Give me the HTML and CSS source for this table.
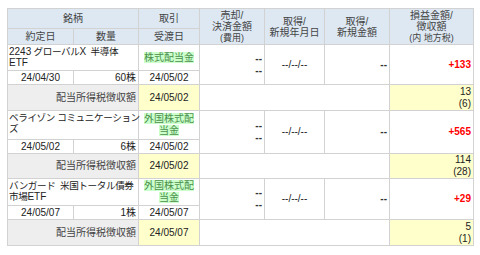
FILE: index.html
```html
<!DOCTYPE html>
<html lang="ja">
<head>
<meta charset="utf-8">
<link rel="stylesheet" href="styles.css">
</head>
<body>
<table class="tbl">
  <colgroup>
    <col class="c1"><col class="c2"><col class="c3"><col class="c4"><col class="c5"><col class="c6"><col class="c7">
  </colgroup>
  <thead>
    <tr class="h1">
      <th colspan="2">銘柄</th>
      <th>取引</th>
      <th rowspan="2">売却/<br>決済金額<br><span class="sm">(費用)</span></th>
      <th rowspan="2">取得/<br>新規年月日</th>
      <th rowspan="2">取得/<br>新規金額</th>
      <th rowspan="2">損益金額/<br>徴収額<br><span class="sm">(内 地方税)</span></th>
    </tr>
    <tr class="h2">
      <th>約定日</th>
      <th>数量</th>
      <th>受渡日</th>
    </tr>
  </thead>
  <tbody>
    <tr class="ra r1">
      <td colspan="2" class="name"><span class="lat">2243</span> グローバル<span class="lat">X</span>&nbsp; 半導体<br><span class="lat">ETF</span></td>
      <td class="ctr"><span class="kind">株式配当金</span></td>
      <td rowspan="2" class="rt dd">--<br>--</td>
      <td rowspan="2" class="ctr">--/--/--</td>
      <td rowspan="2" class="rt dd">--</td>
      <td rowspan="2" class="rt plus">+133</td>
    </tr>
    <tr class="rb">
      <td class="ctr">24/04/30</td>
      <td class="rt">60株</td>
      <td class="ctr">24/05/02</td>
    </tr>
    <tr class="tax t1">
      <td colspan="2" class="label">配当所得税徴収額</td>
      <td class="ylw date">24/05/02</td>
      <td colspan="3"></td>
      <td class="ylw rt amt">13<br>(6)</td>
    </tr>
    <tr class="ra r2">
      <td colspan="2" class="name">ベライゾン&nbsp;コミュニケーション<br>ズ</td>
      <td class="ctr"><span class="kind">外国株式配<br>当金</span></td>
      <td rowspan="2" class="rt dd">--<br>--</td>
      <td rowspan="2" class="ctr">--/--/--</td>
      <td rowspan="2" class="rt dd">--</td>
      <td rowspan="2" class="rt plus">+565</td>
    </tr>
    <tr class="rb">
      <td class="ctr">24/05/02</td>
      <td class="rt">6株</td>
      <td class="ctr">24/05/02</td>
    </tr>
    <tr class="tax t2">
      <td colspan="2" class="label">配当所得税徴収額</td>
      <td class="ylw date">24/05/02</td>
      <td colspan="3"></td>
      <td class="ylw rt amt">114<br>(28)</td>
    </tr>
    <tr class="ra r3">
      <td colspan="2" class="name">バンガード&nbsp; 米国トータル債券<br>市場<span class="lat">ETF</span></td>
      <td class="ctr"><span class="kind">外国株式配<br>当金</span></td>
      <td rowspan="2" class="rt dd">--<br>--</td>
      <td rowspan="2" class="ctr">--/--/--</td>
      <td rowspan="2" class="rt dd">--</td>
      <td rowspan="2" class="rt plus">+29</td>
    </tr>
    <tr class="rb">
      <td class="ctr">24/05/07</td>
      <td class="rt">1株</td>
      <td class="ctr">24/05/07</td>
    </tr>
    <tr class="tax t3">
      <td colspan="2" class="label">配当所得税徴収額</td>
      <td class="ylw date">24/05/07</td>
      <td colspan="3"></td>
      <td class="ylw rt amt">5<br>(1)</td>
    </tr>
  </tbody>
</table>
</body>
</html>
```
FILE: styles.css
```css
html, body {
  margin: 0;
  background: #ffffff;
}
body {
  padding: 8px 7px;
  font-family: "Liberation Sans", "Noto Sans CJK JP", sans-serif;
  font-size: 10px;
  line-height: 12px;
  color: #222222;
}
.tbl {
  border-collapse: collapse;
  table-layout: fixed;
  width: 466px;
  border: 1px solid #cfcfcf;
}
.c1 { width: 66px; }
.c2 { width: 65px; }
.c3 { width: 61px; }
.c4 { width: 65px; }
.c5 { width: 60px; }
.c6 { width: 65px; }
.c7 { width: 84px; }
th, td {
  border: 1px solid #d2d2d2;
  padding: 0 2px;
  vertical-align: middle;
  white-space: nowrap;
  overflow: hidden;
}
th {
  background: #dde8f3;
  font-weight: normal;
  color: #444444;
  text-align: center;
  line-height: 11px;
}
.sm { font-size: 9px; }
.h1 th { height: 19px; }
.h2 th { height: 15px; }
.ctr { text-align: center; }
.rt { text-align: right; }
.name {
  text-align: left;
  padding: 1px 1px;
  vertical-align: top;
  line-height: 11px;
  font-size: 9.6px;
  letter-spacing: -0.4px;
  overflow: visible;
}
.lat {
  font-size: 10px;
  letter-spacing: 0;
}
.r1 td { height: 23px; }
.r2 td { height: 26px; }
.r3 td { height: 24px; }
.rb td { height: 13px; line-height: 12px; }
.kind {
  background: #ccffcc;
  color: #4b8f4b;
  line-height: 12px;
}
.dd { font-weight: bold; color: #333333; }
.plus {
  color: #ff0000;
  font-weight: bold;
}
.tax td { height: 25px; }
.t2 td { height: 24px; }
.label {
  background: #eeeeee;
  text-align: right;
  color: #444444;
}
.ylw { background: #ffffcc; }
.date { text-align: center; }
.amt { line-height: 12px; }
```
